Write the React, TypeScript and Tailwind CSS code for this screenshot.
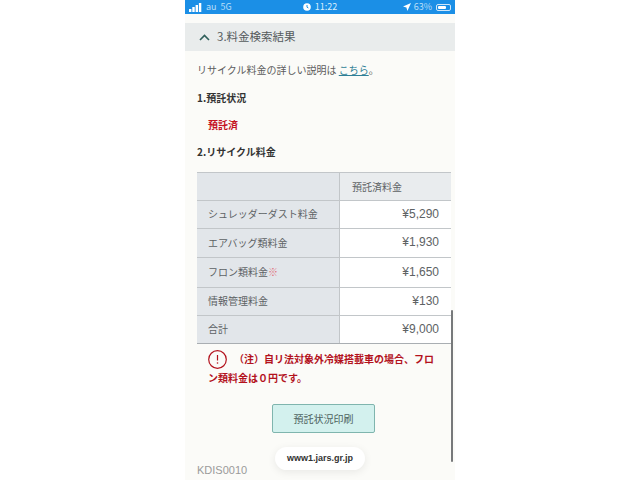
import React from 'react'

const rows = [
  { label: 'シュレッダーダスト料金', price: '¥5,290', h: 'h-[28px]' },
  { label: 'エアバッグ類料金', price: '¥1,930', h: 'h-[29px]' },
  { label: 'フロン類料金', price: '¥1,650', h: 'h-[30px]', mark: true },
  { label: '情報管理料金', price: '¥130', h: 'h-[28px]' },
  { label: '合計', price: '¥9,000', h: 'h-[28px]' },
]

const font = "font-['Noto_Sans_CJK_JP','Noto_Sans',sans-serif]"

const StatusBar = () => (
  <div className="flex h-[14px] items-center justify-between bg-[#1b8fe6] px-[4px] text-[9px] text-[#b9def8]">
    <div className="flex w-[90px] items-center gap-[4px]">
      <svg width="13" height="9" viewBox="0 0 13 9">
        <rect x="0" y="6" width="2.4" height="3" fill="#fff" />
        <rect x="3.3" y="4" width="2.4" height="5" fill="#fff" />
        <rect x="6.6" y="2" width="2.4" height="7" fill="#fff" />
        <rect x="9.9" y="0" width="2.4" height="9" fill="#fff" />
      </svg>
      <span>au</span>
      <span>5G</span>
    </div>
    <div className="flex items-center gap-[4px] text-[#d9eefc]">
      <svg width="8" height="8" viewBox="0 0 8 8">
        <circle cx="4" cy="4" r="3.8" fill="#fff" />
        <path d="M4 2v2.2l1.4.8" stroke="#1b8fe6" strokeWidth="1" fill="none" />
      </svg>
      <span>11:22</span>
    </div>
    <div className="flex w-[90px] items-center justify-end gap-[3px]">
      <svg width="8" height="8" viewBox="0 0 8 8">
        <path d="M8 0 0 3.6l3.4 1L4.4 8z" fill="#fff" />
      </svg>
      <span className="mr-[1px]">63%</span>
      <div className="flex h-[7px] w-[15px] items-center rounded-[2px] border border-[#cfe7fa] p-[1px]">
        <div className="h-full w-[8px] rounded-[1px] bg-white" />
      </div>
    </div>
  </div>
)

const App = () => {
  return (
    <div className={`flex h-[480px] w-[640px] justify-center overflow-hidden bg-white ${font}`}>
      <div className="relative h-[480px] w-[270px] overflow-hidden bg-[#fbfbf8]">
        <StatusBar />

        <div className="mt-[9px] flex h-[28px] items-center gap-[7px] bg-[#e9ecec] pl-[14px] text-[11.5px] text-[#555b5c]">
          <svg width="11" height="7" viewBox="0 0 11 7">
            <path d="M1 6l4.5-4.5L10 6" stroke="#2f5f5a" strokeWidth="1.6" fill="none" />
          </svg>
          <span>3.料金検索結果</span>
        </div>

        <div className="pl-[12px]">
          <p className="mt-[11px] h-[16px] text-[10px] leading-[16px] text-[#5c5c5c]">
            リサイクル料金の詳しい説明は <span className="text-[#2f7f96] underline">こちら</span>。
          </p>
          <p className="mt-[12px] h-[16px] text-[10px] font-bold leading-[16px] text-[#333]">1.預託状況</p>
          <p className="mt-[11px] h-[16px] pl-[11px] text-[10px] font-bold leading-[16px] text-[#c4121f]">預託済</p>
          <p className="mt-[11px] h-[16px] text-[10px] font-bold leading-[16px] text-[#333]">2.リサイクル料金</p>

          <div className="mt-[12px] w-[254px] border-t border-[#c2c6c9] text-[10px] text-[#5d6264]">
            <div className="flex h-[28px] border-b border-[#c2c6c9]">
              <div className="w-[143px] border-r border-[#c2c6c9] bg-[#e2e6ea]" />
              <div className="flex flex-1 items-center bg-[#e9ecee] pb-[1px] pl-[12px]">預託済料金</div>
            </div>
            {rows.map((row, i) => (
              <div
                key={row.label}
                className={`flex ${row.h} border-b ${i === rows.length - 1 ? 'border-[#a9aeb2]' : 'border-[#c2c6c9]'}`}
              >
                <div className="flex w-[143px] items-center border-r border-[#c2c6c9] bg-[#e2e6ea] pb-[2px] pl-[11px]">
                  {row.label}
                  {row.mark && <span className="text-[#e0707a]">※</span>}
                </div>
                <div className="flex flex-1 items-center justify-end bg-white pb-[2px] pr-[12px] font-['Liberation_Sans',sans-serif] text-[12px]">
                  {row.price}
                </div>
              </div>
            ))}
          </div>

          <div className="mt-[6px] w-[240px] pl-[11px] text-[10px] font-bold leading-[18.5px] text-[#b3121d]">
            <svg width="19" height="19" viewBox="0 0 19 19" className="mr-[6px] inline-block align-top">
              <circle cx="9.5" cy="9.5" r="8.8" stroke="#b3121d" strokeWidth="1.2" fill="none" />
              <path d="M9.5 5v5.5" stroke="#b3121d" strokeWidth="1.2" />
              <circle cx="9.5" cy="13" r="0.8" fill="#b3121d" />
            </svg>
            <span className="ml-[1px]">（注）自リ法対象外冷媒搭載車の場合、フロン類料金は０円です。</span>
          </div>

          <div className="mt-[16px] flex w-[254px] justify-center">
            <button className="ml-[-1px] h-[29px] w-[103px] rounded-[2px] border border-[#7fb5ae] bg-[#d3f1ee] text-[10px] text-[#4d6360]">
              預託状況印刷
            </button>
          </div>

          <p className="mt-[30px] font-['Liberation_Sans',sans-serif] text-[11px] leading-[14px] text-[#9a9a9a]">KDIS0010</p>
        </div>

        <div className="absolute right-[2px] top-[310px] h-[152px] w-[2px] rounded-full bg-[#77797b]" />
        <div className="absolute left-[90px] top-[447px] flex h-[23px] w-[90px] items-center justify-center rounded-full bg-white font-['Liberation_Sans',sans-serif] text-[9px] font-semibold text-[#333] shadow-[0_2px_8px_rgba(0,0,0,0.08)]">
          www1.jars.gr.jp
        </div>
      </div>
    </div>
  )
}

export default App
